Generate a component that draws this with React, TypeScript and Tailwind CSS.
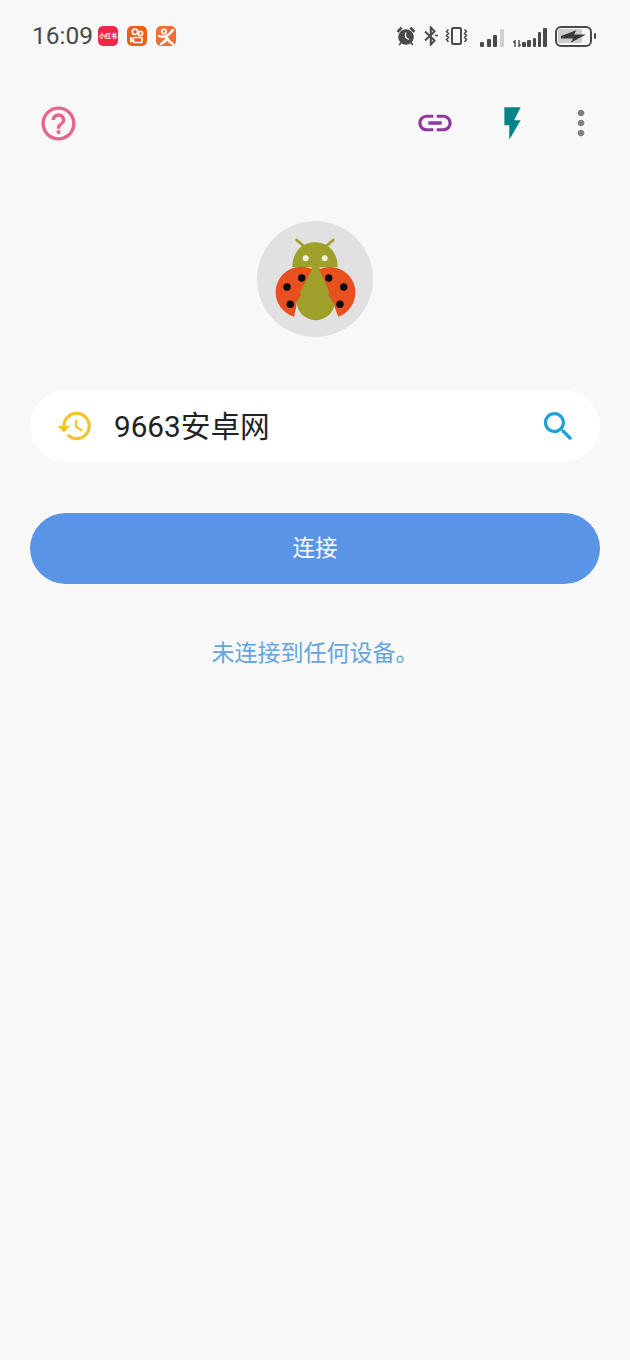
function MaterialIcon({ d, className }: { d: string; className: string }) {
  return (
    <svg viewBox="0 0 24 24" fill="currentColor" className={className} aria-hidden="true">
      <path d={d} />
    </svg>
  )
}

function StatusBar() {
  return (
    <div className="flex h-[72px] items-center justify-between pl-[32px] pr-[34px]">
      <div className="flex items-center">
        <span className="w-[59px] text-[24.5px] leading-none text-[#4a4a4a]">16:09</span>
        <div className="ml-[7px] flex h-[20px] w-[20px] items-center justify-center overflow-hidden rounded-[5px] bg-[#f0264b]">
          <span className="whitespace-nowrap text-[6px] font-bold leading-none text-white">小红书</span>
        </div>
        <div className="ml-[9px] h-[20px] w-[20px] rounded-[5px] bg-[#e8601c]">
          <svg viewBox="0 0 20 20" className="h-[20px] w-[20px]" fill="none" stroke="#fff" strokeWidth="1.7" aria-hidden="true">
            <circle cx="8" cy="5.800" r="2.700" />
            <circle cx="13.500" cy="7.500" r="2.100" />
            <rect x="6.500" y="11.500" width="8.500" height="5" rx="0.800" />
            <path d="M6.500 13l-2.500-1v3.500l2.500-1" />
          </svg>
        </div>
        <div className="ml-[9px] h-[20px] w-[20px] rounded-[5px] bg-[#ee7038]">
          <svg viewBox="0 0 20 20" className="h-[20px] w-[20px]" fill="none" stroke="#fff" strokeWidth="2.400" strokeLinecap="round" aria-hidden="true">
            <circle cx="8" cy="5.500" r="2.200" strokeWidth="1.700" />
            <path d="M3 10c4.500 2 9.500 0 14-6" />
            <path d="M11 11.500c-1 3-3 5-6 6.500M11 11.500c1 3 3 5 6 6.500" />
          </svg>
        </div>
      </div>
      <div className="flex items-center text-[#4a4a4a]">
        <svg viewBox="0 0 20 20" className="h-[20px] w-[20px]" fill="currentColor" aria-hidden="true">
          <circle cx="10" cy="11" r="7.800" />
          <path d="M.6 5 4.600.8l2 1.800-4.200 4.200zM19.400 5 15.400.8l-2 1.800 4.200 4.200z" />
          <path d="M4.500 16 2.500 18.500l1.300 1 2-2.500zM15.500 16l2 2.500-1.300 1-2-2.500z" />
          <path d="M9.600 6.500v4.800l3.300 2.200" fill="none" stroke="#f8f8f8" strokeWidth="1.300" />
        </svg>
        <svg viewBox="0 0 14 20" className="ml-[8px] h-[20px] w-[14px]" fill="none" stroke="currentColor" strokeWidth="2" aria-hidden="true">
          <path d="M1 5.500l9.500 9L6.800 18.500V1.500l3.700 4L1 14.500" />
          <path d="M11 9.500h3" strokeWidth="1.500" />
        </svg>
        <svg viewBox="0 0 23 18" className="ml-[7px] h-[18px] w-[23px]" fill="none" stroke="currentColor" aria-hidden="true">
          <rect x="7" y="1" width="9" height="16" rx="1.200" strokeWidth="2" />
          <path d="M3.500 2.500l-2 2 2 2-2 2 2 2-2 2 2 2.500M19.500 2.500l2 2-2 2 2 2-2 2 2 2-2 2.500" strokeWidth="1.500" />
        </svg>
        <div className="ml-[12px] mt-[3px] flex items-end gap-[2.600px]">
          <div className="h-[5px] w-[4px] rounded-[1px] bg-[#4a4a4a]" />
          <div className="h-[8px] w-[4px] rounded-[1px] bg-[#4a4a4a]" />
          <div className="h-[12px] w-[4px] rounded-[1px] bg-[#4a4a4a]" />
          <div className="h-[18px] w-[4px] rounded-[1px] bg-[#cfcfcf]" />
        </div>
        <svg viewBox="0 0 8 7" className="ml-[9px] mt-[14px] h-[7px] w-[8px]" fill="none" stroke="currentColor" strokeWidth="1.400" aria-hidden="true">
          <path d="M2 7V.8L.4 2.400M6 0v6.200L7.600 4.600" />
        </svg>
        <div className="ml-[1.500px] mt-[3px] flex items-end gap-[1.700px]">
          <div className="h-[5px] w-[3.500px] rounded-[1px] bg-[#4a4a4a]" />
          <div className="h-[7px] w-[3.500px] rounded-[1px] bg-[#4a4a4a]" />
          <div className="h-[9px] w-[3.500px] rounded-[1px] bg-[#4a4a4a]" />
          <div className="h-[15px] w-[3.500px] rounded-[1px] bg-[#4a4a4a]" />
          <div className="h-[19px] w-[3.500px] rounded-[1px] bg-[#4a4a4a]" />
        </div>
        <div className="ml-[8px] flex items-center">
          <div className="relative h-[21px] w-[37px] overflow-hidden rounded-[6px] border-2 border-[#4a4a4a] p-[1.500px]">
            <div className="h-full w-[24px] rounded-[2px] bg-[#cccccc]" />
            <svg viewBox="0 0 26 13" className="absolute left-[4px] top-[2px] h-[13px] w-[25px]" fill="#3a3a3a" aria-hidden="true">
              <path d="M0 6 16 0 13.500 4.500H26L10 13 12.500 8.500H0z" />
            </svg>
          </div>
          <div className="ml-[2px] h-[6px] w-[2.500px] rounded-[1px] bg-[#4a4a4a]" />
        </div>
      </div>
    </div>
  )
}

function Toolbar() {
  return (
    <div className="flex h-[102px] items-center pl-[38px] pr-[29px]">
      <MaterialIcon
        className="h-[41px] w-[41px] text-[#e8638f]"
        d="M11 18h2v-2h-2v2zm1-16C6.480 2 2 6.480 2 12s4.480 10 10 10 10-4.480 10-10S17.520 2 12 2zm0 18c-4.410 0-8-3.590-8-8s3.590-8 8-8 8 3.590 8 8-3.590 8-8 8zm0-14c-2.210 0-4 1.790-4 4h2c0-1.100.9-2 2-2s2 .9 2 2c0 2-3 1.750-3 5h2c0-2.250 3-2.500 3-5 0-2.210-1.790-4-4-4z"
      />
      <MaterialIcon
        className="ml-auto h-[40px] w-[40px] text-[#8e3a9d]"
        d="M3.900 12c0-1.710 1.390-3.100 3.100-3.100h4V7H7c-2.760 0-5 2.240-5 5s2.240 5 5 5h4v-1.900H7c-1.710 0-3.100-1.390-3.100-3.100zM8 13h8v-2H8v2zm9-6h-4v1.900h4c1.710 0 3.100 1.390 3.100 3.100s-1.390 3.100-3.100 3.100h-4V17h4c2.760 0 5-2.240 5-5s-2.240-5-5-5z"
      />
      <MaterialIcon className="ml-[38px] h-[39px] w-[39px] text-[#00848a]" d="M7 2v11h3v9l7-12h-4l4-8z" />
      <MaterialIcon
        className="ml-[29px] h-[40px] w-[40px] text-[#808080]"
        d="M12 8c1.100 0 2-.9 2-2s-.9-2-2-2-2 .9-2 2 .9 2 2 2zm0 2c-1.100 0-2 .9-2 2s.9 2 2 2 2-.9 2-2-.9-2-2-2zm0 6c-1.100 0-2 .9-2 2s.9 2 2 2 2-.9 2-2-.9-2-2-2z"
      />
    </div>
  )
}

function BugLogo() {
  return (
    <div className="mx-auto mt-[47px] h-[116px] w-[116px] rounded-full bg-[#e1e1e1]">
      <svg viewBox="0 0 116 116" className="h-[116px] w-[116px]" aria-hidden="true">
        <path d="M39.700 19l6.600 5.700M76.300 19l-6.600 5.700" stroke="#9fa02a" strokeWidth="2.800" strokeLinecap="round" />
        <path d="M35.300 46.300C35.300 31 45 21.300 58 21.300s22.700 9.700 22.700 25z" fill="#9fa02a" />
        <circle cx="48.700" cy="37.300" r="3" fill="#f3f1dc" />
        <circle cx="67.700" cy="37.300" r="3" fill="#f3f1dc" />
        <path d="M55 46h7L78 76a19.500 20 0 1 1-38.500 0z" fill="#9fa02a" />
        <path
          d="M55.300 48.300A25.500 25.500 0 1 0 37 95.700L39 87.300 39.700 80.700 44 74 43 70.700z"
          fill="#e8501f"
        />
        <path
          d="M62 48.300A25.620 25.620 0 1 1 81.300 95.700L78 87.300 77 82.300 71.300 74 72.300 70.700z"
          fill="#e8501f"
        />
        <circle cx="44.700" cy="57" r="3.700" fill="#0a0a0a" />
        <circle cx="30" cy="66" r="3.700" fill="#0a0a0a" />
        <circle cx="33.300" cy="83.300" r="3.700" fill="#0a0a0a" />
        <circle cx="71.700" cy="57" r="3.700" fill="#0a0a0a" />
        <circle cx="86.700" cy="66" r="3.700" fill="#0a0a0a" />
        <circle cx="83" cy="83.300" r="3.700" fill="#0a0a0a" />
      </svg>
    </div>
  )
}

export default function App() {
  return (
    <div className="h-[1360px] w-[630px] overflow-hidden bg-[#f8f8f8] font-['Roboto','Noto_Sans_CJK_SC',sans-serif]">
      <StatusBar />
      <Toolbar />
      <BugLogo />
      <div className="mx-[30px] mt-[53px] flex h-[72px] items-center rounded-[36px] bg-white pl-[26px] pr-[23px]">
        <MaterialIcon
          className="h-[38px] w-[38px] text-[#f0c52e]"
          d="M13 3c-4.970 0-9 4.030-9 9H1l3.890 3.890.07.14L9 12H6c0-3.870 3.130-7 7-7s7 3.130 7 7-3.130 7-7 7c-1.930 0-3.680-.79-4.940-2.060l-1.420 1.420C8.270 19.990 10.510 21 13 21c4.970 0 9-4.030 9-9s-4.030-9-9-9zm-1 5v5l4.280 2.540.72-1.210-3.500-2.080V8H12z"
        />
        <span className="ml-[20px] pt-[2px] text-[29.700px] leading-none text-[#222222]">9663安卓网</span>
        <MaterialIcon
          className="ml-auto mr-[-1px] h-[39px] w-[39px] text-[#1ea3d8]"
          d="M15.500 14h-.79l-.28-.27C15.410 12.590 16 11.110 16 9.500 16 5.910 13.090 3 9.500 3S3 5.910 3 9.500 5.910 16 9.500 16c1.610 0 3.090-.59 4.230-1.570l.27.28v.79l5 4.990L20.490 19l-4.990-5zm-6 0C7.010 14 5 11.990 5 9.500S7.010 5 9.500 5 14 7.010 14 9.500 11.990 14 9.500 14z"
        />
      </div>
      <button
        type="button"
        className="mx-[30px] mt-[51px] flex h-[71px] w-[570px] items-center justify-center rounded-[36px] bg-[#5a94e6] text-[22.500px] text-white"
      >
        连接
      </button>
      <p className="mt-[53px] text-center text-[23px] leading-[34px] text-[#64a5dc]">未连接到任何设备。</p>
    </div>
  )
}
